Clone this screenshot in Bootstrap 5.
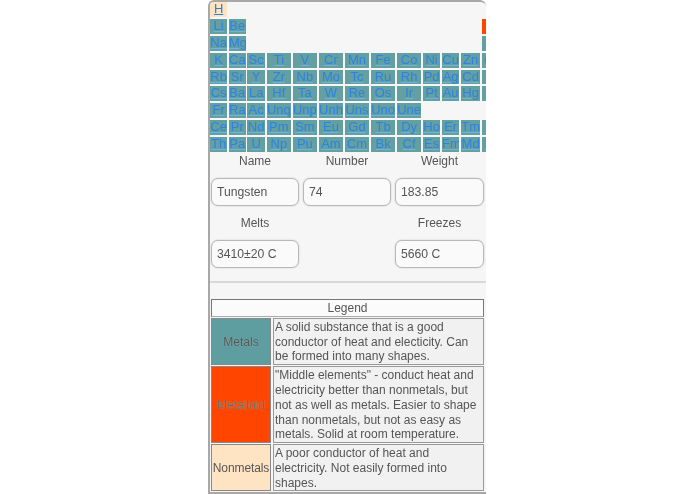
<!DOCTYPE html>
<html lang="en"><head><meta charset="utf-8"><title>Periodic Table</title>
<link href="https://cdn.jsdelivr.net/npm/bootstrap@5.3.0/dist/css/bootstrap.min.css" rel="stylesheet">
<style>
html,body{height:494px;overflow:hidden;background:#fff}
body{font-family:"Liberation Sans",Arial,sans-serif;color:#444}
.screen{width:278px;height:494px;margin-right:1px;background:#f6f6f6;border:solid #a8a8a8;border-width:2px 0 2px 2px;border-top-left-radius:6px;border-top-right-radius:6px;overflow:hidden;filter:blur(.35px)}
.ptable{display:flex;flex-direction:column;gap:1.9px;width:290px;height:150px}
.prow{display:grid;grid-template-columns:19px 18.3px 19.4px repeat(6,26.05px) 19px 19px 21px 24px;height:15px}
.prow a{display:block;margin-right:1.7px;font-size:13px;line-height:13px;text-align:center;color:#2a84e6;text-decoration-color:#6fb2dc;white-space:nowrap;overflow:hidden;background:#649fa1}
.prow a.tnon{background:#ffe4c4;color:#2f7fc8;text-decoration-color:#2f7fc8}
.prow a.tmid{background:#ff4500}
.prow a.tlast{grid-column:13}
.fields{height:131px;border-bottom:2px solid #d8d8d8;padding-left:1px}
.fieldrow{display:grid;grid-template-columns:88px 88px 89px;column-gap:4px;width:273px}
.fieldlab{font-size:12px;line-height:14px;text-align:center;color:#555;height:26px;padding-top:2px}
.fieldval{height:28px;border:1px solid #b8b8b8;border-radius:7px;background:#fafafa;font-size:12.2px;line-height:26px;padding-left:5px;color:#555;margin-bottom:8px;box-shadow:0 0 2px #ccc}
.legendbox{width:275px;margin-top:16px;padding-left:1px}
.legendhead{height:18px;border:1px solid #777;border-bottom-color:#aaa;background:#fbfbfb;text-align:center;font-size:12px;line-height:16px;color:#555;margin-bottom:1px;width:273px}
.legendrow{display:grid;grid-template-columns:60px 211px;column-gap:2px;margin-bottom:1.3px;width:273px}
.legendkey{display:flex;align-items:center;justify-content:center;font-size:12px;border:1px solid #888;color:#555}
.legendtxt{border:1px solid #999;background:#f1f1f1;font-size:12px;line-height:14.7px;padding:1px 0 0 1px;color:#555}
.kmetal{background:#5f9ea0;text-shadow:0 0 1px rgba(210,225,225,.5)}.kmid{background:#ff4500;color:#74685c;text-shadow:0 0 1px #e8b080}.knon{background:#ffe4c4;letter-spacing:-.1px}
</style></head>
<body class="d-flex justify-content-center m-0">
<main class="screen flex-shrink-0">
<div class="ptable">
<div class="prow"><a class="tnon" href="#">H</a></div>
<div class="prow"><a href="#">Li</a><a href="#">Be</a><a class="tmid tlast" href="#">B</a></div>
<div class="prow"><a href="#">Na</a><a href="#">Mg</a><a class="tlast" href="#">Al</a></div>
<div class="prow"><a href="#">K</a><a href="#">Ca</a><a href="#">Sc</a><a href="#">Ti</a><a href="#">V</a><a href="#">Cr</a><a href="#">Mn</a><a href="#">Fe</a><a href="#">Co</a><a href="#">Ni</a><a href="#">Cu</a><a href="#">Zn</a><a href="#">Ga</a></div>
<div class="prow"><a href="#">Rb</a><a href="#">Sr</a><a href="#">Y</a><a href="#">Zr</a><a href="#">Nb</a><a href="#">Mo</a><a href="#">Tc</a><a href="#">Ru</a><a href="#">Rh</a><a href="#">Pd</a><a href="#">Ag</a><a href="#">Cd</a><a href="#">In</a></div>
<div class="prow"><a href="#">Cs</a><a href="#">Ba</a><a href="#">La</a><a href="#">Hf</a><a href="#">Ta</a><a href="#">W</a><a href="#">Re</a><a href="#">Os</a><a href="#">Ir</a><a href="#">Pt</a><a href="#">Au</a><a href="#">Hg</a><a href="#">Tl</a></div>
<div class="prow"><a href="#">Fr</a><a href="#">Ra</a><a href="#">Ac</a><a href="#">Unq</a><a href="#">Unp</a><a href="#">Unh</a><a href="#">Uns</a><a href="#">Uno</a><a href="#">Une</a></div>
<div class="prow"><a href="#">Ce</a><a href="#">Pr</a><a href="#">Nd</a><a href="#">Pm</a><a href="#">Sm</a><a href="#">Eu</a><a href="#">Gd</a><a href="#">Tb</a><a href="#">Dy</a><a href="#">Ho</a><a href="#">Er</a><a href="#">Tm</a><a href="#">Yb</a></div>
<div class="prow"><a href="#">Th</a><a href="#">Pa</a><a href="#">U</a><a href="#">Np</a><a href="#">Pu</a><a href="#">Am</a><a href="#">Cm</a><a href="#">Bk</a><a href="#">Cf</a><a href="#">Es</a><a href="#">Fm</a><a href="#">Md</a><a href="#">No</a></div>
</div>
<section class="fields">
<div class="fieldrow">
<div><div class="fieldlab">Name</div><div class="fieldval">Tungsten</div></div>
<div><div class="fieldlab">Number</div><div class="fieldval">74</div></div>
<div><div class="fieldlab">Weight</div><div class="fieldval">183.85</div></div>
</div>
<div class="fieldrow">
<div><div class="fieldlab">Melts</div><div class="fieldval">3410±20 C</div></div>
<div></div>
<div><div class="fieldlab">Freezes</div><div class="fieldval">5660 C</div></div>
</div>
</section>
<section class="legendbox">
<div class="legendhead">Legend</div>
<div class="legendrow"><div class="legendkey kmetal">Metals</div><div class="legendtxt">A solid substance that is a good conductor of heat and electicity. Can be formed into many shapes.</div></div>
<div class="legendrow"><div class="legendkey kmid">Metalloid</div><div class="legendtxt">"Middle elements" - conduct heat and electricity better than nonmetals, but not as well as metals. Easier to shape than nonmetals, but not as easy as metals. Solid at room temperature.</div></div>
<div class="legendrow"><div class="legendkey knon">Nonmetals</div><div class="legendtxt">A poor conductor of heat and electricity. Not easily formed into shapes.</div></div>
</section>
</main>
<script src="https://cdn.jsdelivr.net/npm/bootstrap@5.3.0/dist/js/bootstrap.bundle.min.js"></script>
</body></html>
